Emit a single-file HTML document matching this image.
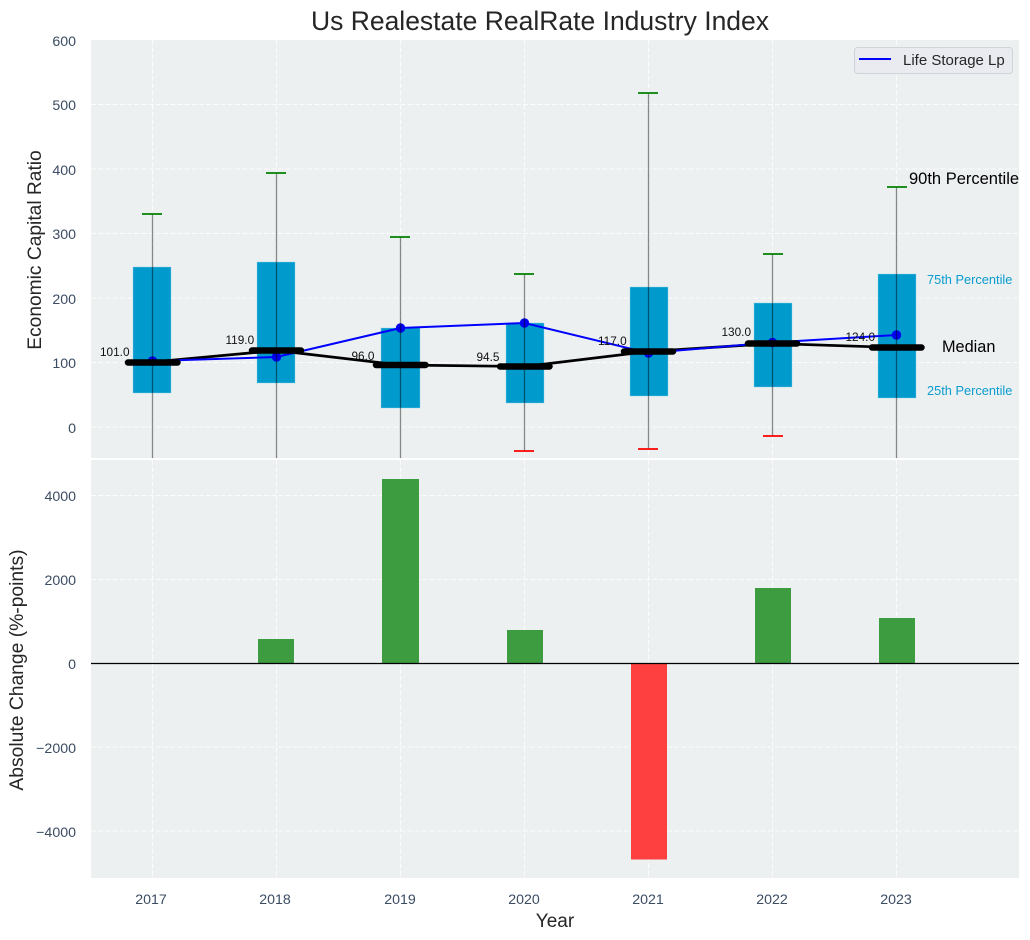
<!DOCTYPE html>
<html>
<head>
<meta charset="utf-8">
<style>
html,body{margin:0;padding:0;background:#fff;width:1030px;height:940px;overflow:hidden}
svg{display:block}
text{font-family:"Liberation Sans",sans-serif}
.t{font-size:14.2px;fill:#3b4c63}
.g{stroke:#fff;stroke-width:1;stroke-dasharray:5 2.2;opacity:.8}
.w{stroke:#000;stroke-opacity:.45;stroke-width:1.3}
.n{font-size:11.8px;fill:#111}
.tb{fill:#009acd;stroke:#8fd3e8;stroke-width:.7;stroke-opacity:.6}
.b{fill:#3d9c3f}
</style>
</head>
<body>
<svg width="1030" height="940" viewBox="0 0 1030 940" xmlns="http://www.w3.org/2000/svg">
<rect width="1030" height="940" fill="#fff"/>
<text x="540" y="30" font-size="26.5" fill="#262626" text-anchor="middle">Us Realestate RealRate Industry Index</text>

<!-- panels -->
<rect x="91" y="40" width="928" height="418" fill="#ecf0f1"/>
<rect x="91" y="460" width="928" height="418" fill="#ecf0f1"/>

<!-- top grid -->
<g class="g">
<path d="M91 104.500H1019M91 169H1019M91 233.500H1019M91 298H1019M91 362.500H1019M91 427H1019"/>
<path d="M152.500 40V458M276.500 40V458M400.500 40V458M524.500 40V458M648.500 40V458M772.500 40V458M896.500 40V458"/>
</g>
<!-- bottom grid -->
<g class="g">
<path d="M91 495.500H1019M91 579.500H1019M91 747H1019M91 831H1019"/>
<path d="M152.500 460V878M276.500 460V878M400.500 460V878M524.500 460V878M648.500 460V878M772.500 460V878M896.500 460V878"/>
</g>

<!-- boxes -->
<rect class="tb" x="133" y="267" width="38" height="126"/>
<rect class="tb" x="257" y="262" width="38" height="121"/>
<rect class="tb" x="381" y="328" width="39" height="80"/>
<rect class="tb" x="506" y="323" width="38" height="80"/>
<rect class="tb" x="630" y="287" width="38" height="109"/>
<rect class="tb" x="754" y="303" width="38" height="84"/>
<rect class="tb" x="878" y="274" width="38" height="124"/>

<!-- median line -->
<polyline points="152.500,362 276.500,350.500 400.500,365 524.500,366.500 648.500,351.500 772.500,343.500 896.500,347.500" fill="none" stroke="#000" stroke-width="2.700"/>

<!-- blue line -->
<polyline points="152.500,361 276.500,357 400.500,328 524.500,323 648.500,353 772.500,342.500 896.500,335" fill="none" stroke="#0000ff" stroke-width="2"/>
<g fill="#0000ee">
<circle cx="152.500" cy="361" r="4.700"/><circle cx="276.500" cy="357" r="4.700"/><circle cx="400.500" cy="328" r="4.700"/><circle cx="524.500" cy="323" r="4.700"/><circle cx="648.500" cy="353" r="4.700"/><circle cx="772.500" cy="342.500" r="4.700"/><circle cx="896.500" cy="335" r="4.700"/>
</g>

<g stroke="#000" stroke-width="6.500" stroke-linecap="round">
<path d="M128 362.500H177.500M252 350.500H301M376 365H425.500M500 366.500H549.500M624 351.500H673M748 343.500H797M872 347.500H921.500"/>
</g>

<!-- whiskers -->
<g class="w">
<path d="M152.500 214V458M276.500 173V458M400.500 237V458M524.500 274V451M648.500 93V449M772.500 254V436M896.500 187V458"/>
</g>
<!-- caps -->
<g stroke="#008000" stroke-width="1.700">
<path d="M142 214H162M266 173H286M390 237H410M514 274H534M638 93H658M763 254H783M887 187H907"/>
</g>
<g stroke="#ff0000" stroke-width="1.700">
<path d="M514 451H534M638 449H658M763 436H783"/>
</g>

<!-- median labels -->
<text class="n" x="100" y="356">101.0</text>
<text class="n" x="225.500" y="344">119.0</text>
<text class="n" x="351.500" y="360">96.0</text>
<text class="n" x="476.500" y="361">94.5</text>
<text class="n" x="598" y="345">117.0</text>
<text class="n" x="721.500" y="336">130.0</text>
<text class="n" x="845.500" y="341">124.0</text>

<!-- annotations -->
<text x="909" y="184" font-size="16.500" fill="#000">90th Percentile</text>
<text x="927" y="284" font-size="12.800" fill="#0a9ccf">75th Percentile</text>
<text x="942" y="352" font-size="16.300" fill="#000">Median</text>
<text x="927" y="395" font-size="12.800" fill="#0a9ccf">25th Percentile</text>

<!-- legend -->
<rect x="854.500" y="47.500" width="158" height="26" rx="3" fill="#e9ebf0" stroke="#d0d3d7" stroke-width="1"/>
<path d="M859 59H891" stroke="#0000ff" stroke-width="2"/>
<text x="903" y="65" font-size="15" fill="#262626">Life Storage Lp</text>

<!-- y ticks top -->
<g class="t" text-anchor="end">
<text x="76" y="46">600</text>
<text x="76" y="110">500</text>
<text x="76" y="175">400</text>
<text x="76" y="239">300</text>
<text x="76" y="304">200</text>
<text x="76" y="368">100</text>
<text x="76" y="433">0</text>
</g>
<!-- y ticks bottom -->
<g class="t" text-anchor="end">
<text x="76" y="501">4000</text>
<text x="76" y="585">2000</text>
<text x="76" y="669">0</text>
<text x="76" y="753">−2000</text>
<text x="76" y="837">−4000</text>
</g>

<!-- bars -->
<rect class="b" x="258" y="639" width="36" height="24.500"/>
<rect class="b" x="382" y="479" width="37" height="184.500"/>
<rect class="b" x="507" y="630" width="36" height="33.500"/>
<rect class="b" x="755" y="588" width="36" height="75.500"/>
<rect class="b" x="879" y="618" width="36" height="45.500"/>
<rect x="631" y="663.500" width="36" height="196" fill="#ff4040"/>
<path d="M91 663.500H1019" stroke="#000" stroke-width="1.300"/>

<!-- x ticks -->
<g class="t" text-anchor="middle">
<text x="151" y="904">2017</text>
<text x="275" y="904">2018</text>
<text x="400" y="904">2019</text>
<text x="524" y="904">2020</text>
<text x="648" y="904">2021</text>
<text x="772" y="904">2022</text>
<text x="896" y="904">2023</text>
</g>

<!-- axis labels -->
<text x="555" y="927" font-size="19" fill="#262626" text-anchor="middle">Year</text>
<text transform="translate(41 250) rotate(-90)" font-size="19.200" fill="#262626" text-anchor="middle">Economic Capital Ratio</text>
<text transform="translate(23 670) rotate(-90)" font-size="19.300" fill="#262626" text-anchor="middle">Absolute Change (%-points)</text>
</svg>
</body>
</html>
